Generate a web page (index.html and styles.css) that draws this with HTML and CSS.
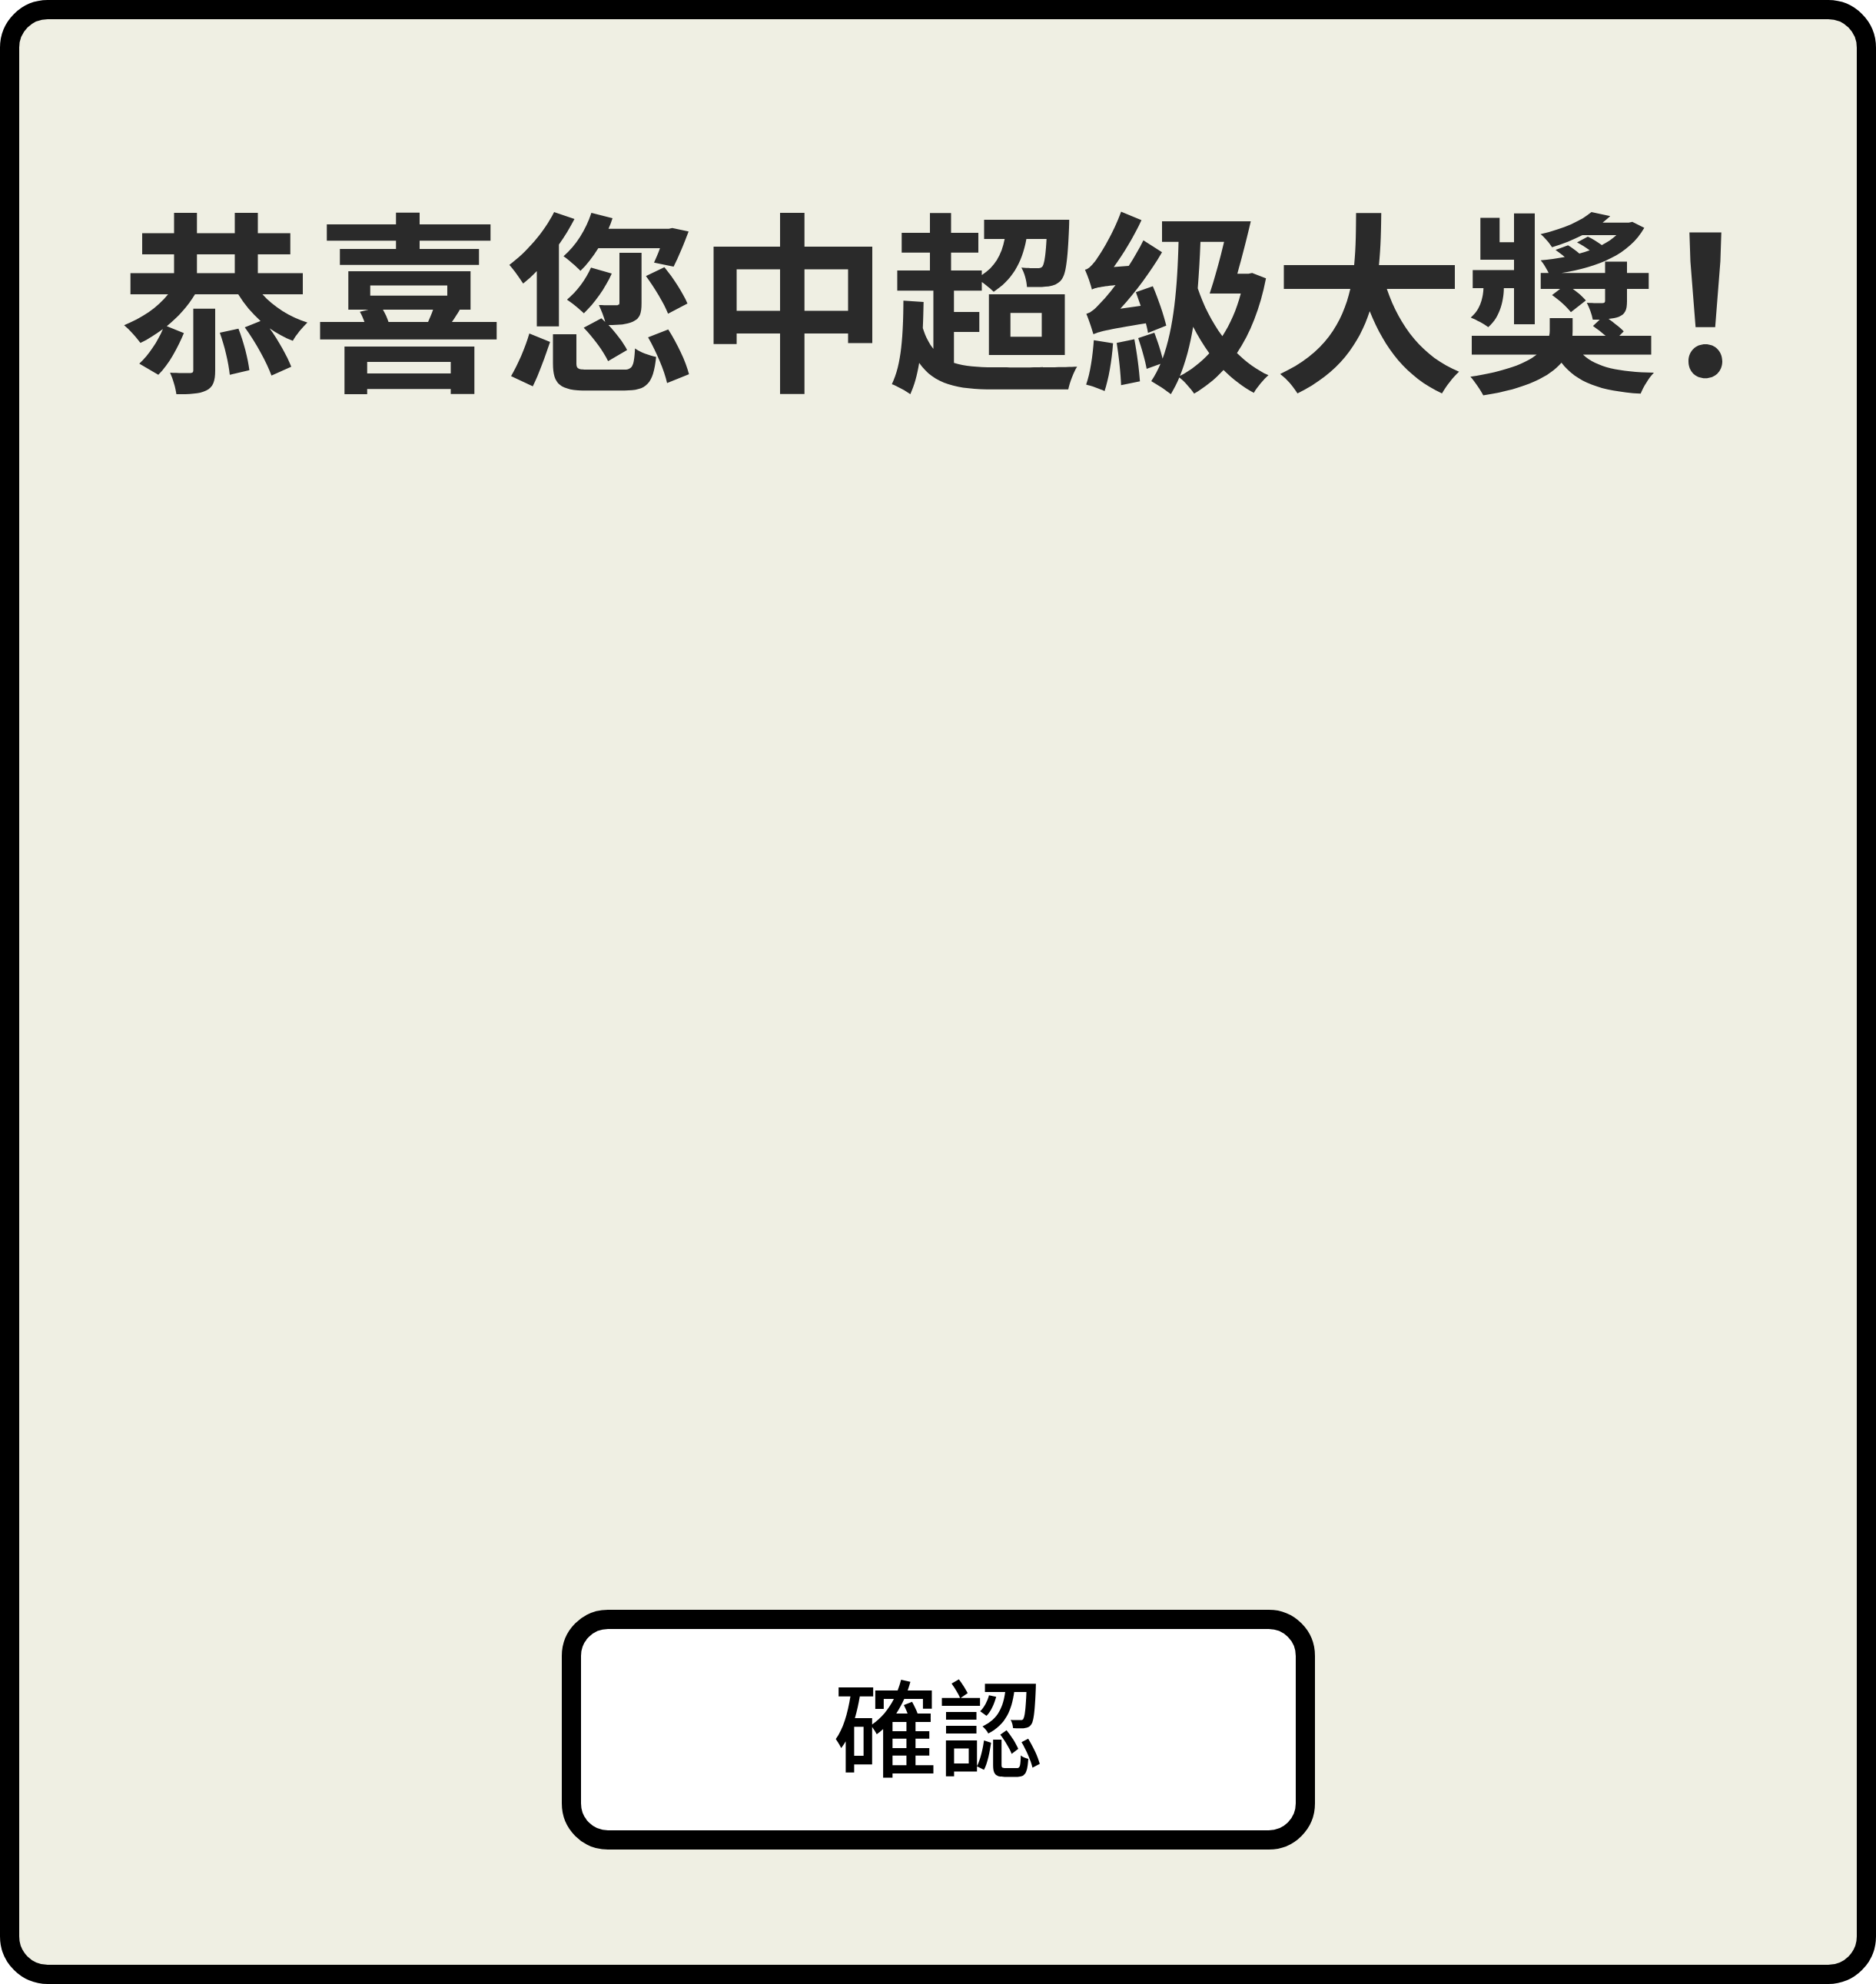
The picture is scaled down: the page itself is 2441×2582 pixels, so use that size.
FILE: index.html
```html
<!DOCTYPE html>
<html lang="zh-Hans">
<head>
<meta charset="utf-8">
<title>恭喜您中超級大獎！</title>
<link rel="stylesheet" href="styles.css">
</head>
<body>
<main class="frame">
  <h1 class="title">恭喜您中超級大獎！</h1>
  <button class="confirm" type="button">確認</button>
</main>
</body>
</html>
```
FILE: styles.css
```css
html, body {
  margin: 0;
  padding: 0;
  background: #ffffff;
}
.frame {
  box-sizing: border-box;
  width: 2441px;
  height: 2582px;
  border: 25px solid #000;
  border-radius: 62px;
  background: #efefe3;
  display: flex;
  flex-direction: column;
  align-items: center;
  font-family: "Noto Sans CJK SC", "Noto Sans CJK TC", sans-serif;
}
.title {
  margin: 0;
  padding: 206px 0 0 122px;
  font-size: 250px;
  line-height: 1.2;
  font-weight: 700;
  color: #2a2a2a;
  white-space: nowrap;
}
.confirm {
  margin-top: auto;
  margin-bottom: 150px;
  box-sizing: border-box;
  width: 980px;
  height: 312px;
  border: 25px solid #000;
  border-radius: 60px;
  background: #ffffff;
  color: #000;
  font-family: "Noto Sans CJK SC", "Noto Sans CJK TC", sans-serif;
  font-size: 136px;
  font-weight: 500;
  line-height: 1;
  padding: 0 0 16px 0;
}
```
